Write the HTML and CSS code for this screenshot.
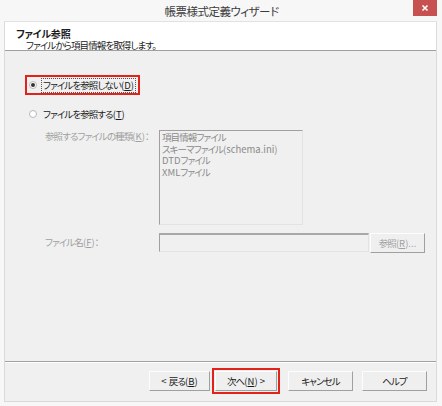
FILE: index.html
```html
<!DOCTYPE html>
<html lang="ja">
<head>
<meta charset="utf-8">
<title>帳票様式定義ウィザード</title>
<link rel="stylesheet" href="styles.css">
</head>
<body>
<div class="window">
  <div class="titlebar">
    <div class="title">帳票様式定義ウィザード</div>
    <div class="close">
      <svg width="10" height="10" viewBox="0 0 10 10"><path d="M2.5 2.5 L7.5 7.5 M7.5 2.5 L2.5 7.5" stroke="#fff" stroke-width="1.6"/></svg>
    </div>
  </div>
  <div class="client">
    <div class="header">
      <div class="header-title">ファイル参照</div>
      <div class="header-sub">ファイルから項目情報を取得します。</div>
    </div>
    <div class="content">
      <div class="radio-row radio-row--highlight">
        <span class="radio radio--checked"></span>
        <span class="radio-label radio-label--focus">ファイルを参照しない<span class="lat">(<u>D</u>)</span></span>
      </div>
      <div class="radio-row">
        <span class="radio"></span>
        <span class="radio-label">ファイルを参照する<span class="lat">(<u>T</u>)</span></span>
      </div>
      <div class="fields">
        <div class="field-label">参照するファイルの種類<span class="lat">(<u>K</u>)</span>：</div>
        <div class="listbox">
          <div class="list-item">項目情報ファイル</div>
          <div class="list-item">スキーマファイル<span class="lat">(schema.ini)</span></div>
          <div class="list-item"><span class="lat">DTD</span>ファイル</div>
          <div class="list-item"><span class="lat">XML</span>ファイル</div>
        </div>
        <div class="field-label field-label--file">ファイル名<span class="lat">(<u>F</u>)</span>：</div>
        <div class="file-row">
          <div class="textbox"></div>
          <div class="btn btn--browse">参照<span class="lat">(<u>R</u>)...</span></div>
        </div>
      </div>
    </div>
    <div class="footer">
      <div class="btn btn--back"><span class="lat">&lt;&nbsp;</span>戻る<span class="lat">(<u>B</u>)</span></div>
      <div class="btn btn--next">次へ<span class="lat">(<u>N</u>)&nbsp;&gt;</span></div>
      <div class="btn btn--cancel">キャンセル</div>
      <div class="btn btn--help">ヘルプ</div>
    </div>
  </div>
</div>
</body>
</html>
```
FILE: styles.css
```css
html, body {
  margin: 0;
  padding: 0;
}
body {
  width: 442px;
  height: 406px;
  background: #f7f7f7;
  font-family: "Noto Sans CJK JP", "Noto Sans", sans-serif;
  font-feature-settings: "palt";
  font-size: 9.5px;
  letter-spacing: -0.9px;
  color: #1a1a1a;
  overflow: hidden;
}
.lat {
  letter-spacing: 0;
}
.window {
  width: 442px;
  height: 406px;
  padding: 0 5px 0 4px;
  box-sizing: border-box;
  display: flex;
  flex-direction: column;
}
.titlebar {
  height: 21px;
  display: flex;
  align-items: flex-start;
}
.title {
  flex: 1;
  text-align: center;
  font-size: 11.5px;
  letter-spacing: -0.5px;
  line-height: 23px;
  color: #3c3c3c;
  padding-left: 26px;
}
.close {
  width: 24px;
  height: 16px;
  background: #c75050;
  display: flex;
  align-items: center;
  justify-content: center;
}
.client {
  border: 1px solid #dadada;
  border-top-color: #e2e2e2;
  display: flex;
  flex-direction: column;
  height: 381px;
  box-sizing: border-box;
  background: #f0f0f0;
}
.header {
  background: #fff;
  border-bottom: 1px solid #a0a0a0;
  padding: 6px 0 0 11px;
  height: 22px;
}
.header-title {
  font-weight: bold;
  font-size: 10px;
  letter-spacing: -0.2px;
  line-height: 11px;
}
.header-sub {
  padding-left: 10px;
  line-height: 12px;
}
.content {
  height: 311px;
  padding: 24px 11px 0 20px;
  box-sizing: border-box;
  border-bottom: 1px solid #a0a0a0;
}
.radio-row {
  display: flex;
  align-items: center;
  height: 20px;
  width: fit-content;
  min-width: 103px;
  box-sizing: border-box;
  padding: 0 4px 0 4px;
  gap: 4px;
  margin-bottom: 9px;
}
.radio-row--highlight {
  outline: 2px solid #e2231a;
  outline-offset: -2px;
}
.radio {
  width: 8px;
  height: 8px;
  border-radius: 50%;
  border: 1px solid #b8b8b8;
  background: #fff;
  box-sizing: border-box;
  display: flex;
  align-items: center;
  justify-content: center;
  flex: none;
}
.radio--checked::after {
  content: "";
  width: 4px;
  height: 4px;
  border-radius: 50%;
  background: #333;
}
.radio-label {
  line-height: 13px;
  padding: 0 1px;
  border: 1px solid transparent;
  white-space: nowrap;
}
.radio-label--focus {
  border: 1px dotted #555;
}
.fields {
  display: grid;
  grid-template-columns: 114px 1fr;
  row-gap: 8px;
  padding-left: 20px;
  margin-top: -3px;
  color: #a0a0a0;
}
.field-label {
  padding-top: 1px;
  line-height: 11px;
  white-space: nowrap;
}
.field-label--file {
  padding-top: 4px;
}
.listbox {
  width: 144px;
  height: 95px;
  box-sizing: border-box;
  border: 1px solid;
  border-color: #a0a0a0 #e3e3e3 #e3e3e3 #a0a0a0;
  padding: 1px 2px;
  color: #8a8a8a;
}
.list-item {
  line-height: 11.6px;
  white-space: nowrap;
}
.file-row {
  display: flex;
  gap: 1px;
}
.textbox {
  width: 210px;
  height: 19px;
  box-sizing: border-box;
  border-style: solid;
  border-width: 2px 1px 1px 1px;
  border-color: #a8a8a8 #e3e3e3 #e3e3e3 #a0a0a0;
}
.btn {
  height: 20px;
  box-sizing: border-box;
  border: 1px solid;
  border-color: #fdfdfd #a0a0a0 #a0a0a0 #fdfdfd;
  background: #efefef;
  display: flex;
  align-items: center;
  justify-content: center;
  white-space: nowrap;
}
.btn--browse {
  width: 55px;
  color: #a0a0a0;
}
.footer {
  display: flex;
  padding: 8px 0 0 144px;
  border-top: 1px solid #fff;
  flex: 1;
}
.btn--back { width: 61px; }
.btn--next {
  width: 62px;
  margin-left: 5px;
  outline: 2px solid #e2231a;
  outline-offset: 1px;
}
.btn--cancel { width: 65px; margin-left: 11px; }
.btn--help { width: 65px; margin-left: 9px; }
u {
  text-decoration: underline;
  text-underline-offset: 1px;
}
```
